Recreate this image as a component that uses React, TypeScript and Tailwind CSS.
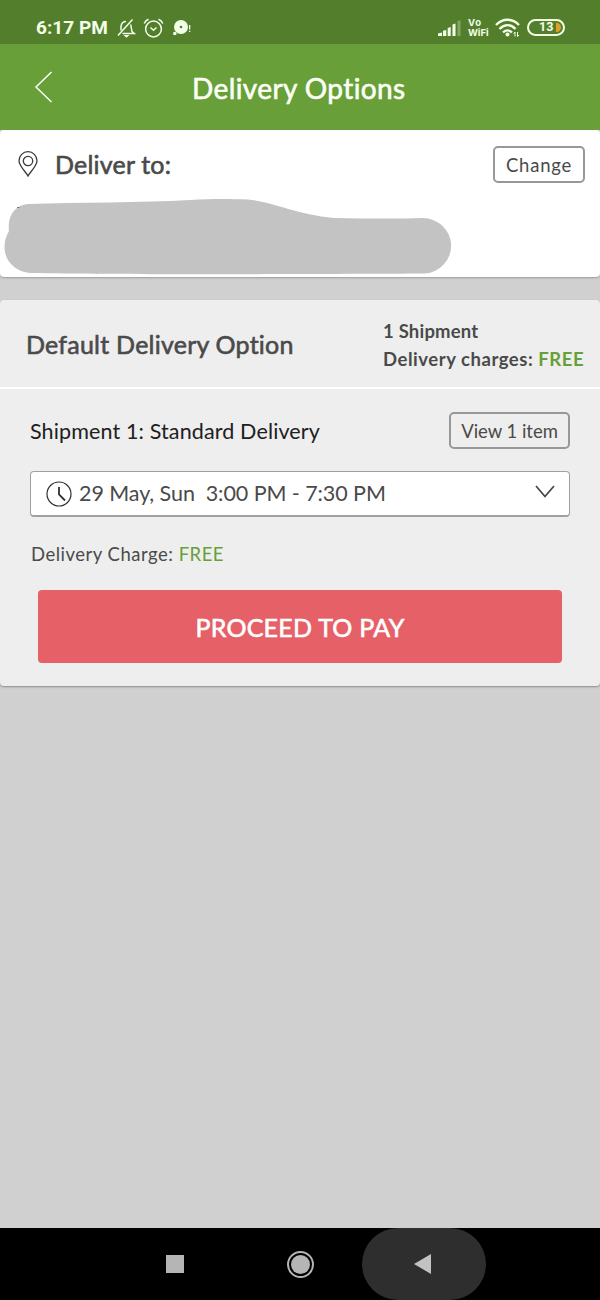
import React from 'react';

const StatusBar: React.FC = () => (
  <div className="flex h-11 items-center bg-[#537f2d] pl-9 pr-[35px] pt-[11px] text-[#f4ffe8]">
    <span className="w-[80px] whitespace-nowrap font-['Roboto',sans-serif] text-[19px] font-bold leading-none tracking-[0.05px]">
      6:17 PM
    </span>
    <svg className="h-5 w-5" viewBox="0 0 20 20" fill="none" stroke="currentColor" strokeWidth="1.5">
      <path d="M5 12.5V8.5C5.3 5.5 7 3.5 10 3.5M14.5 6.5C15.5 8.5 15.2 11.500 16 13.500L18.300 15.500H6.500" />
      <path d="M2 17.500L16.500 1.500" />
      <path d="M7.500 17H13.500L10.500 19.700Z" fill="currentColor" stroke="none" />
    </svg>
    <svg className="ml-[7px] h-5 w-5 overflow-visible" viewBox="0 0 20 20" fill="none" stroke="currentColor" strokeWidth="1.5">
      <circle cx="10.500" cy="11" r="7.900" />
      <path d="M7.500 9.500L10.500 12.200L13.500 9.500M1.200 5.500C2 3.500 3.500 2 5.500 1.300M15.500 1.300C17.500 2 19 3.500 19.800 5.500" />
    </svg>
    <svg className="ml-[10px] h-5 w-5" viewBox="0 0 20 20" fill="currentColor">
      <circle cx="8" cy="9" r="7" />
      <circle cx="1.800" cy="15.500" r="1.800" />
      <circle cx="8" cy="9" r="1.300" fill="#537f2d" />
      <path d="M16 7H17.300V11.500H16ZM16 12.800H17.300V14H16Z" />
    </svg>

    <svg className="ml-auto h-[18px] w-6" viewBox="0 0 24 18" fill="currentColor">
      <path d="M0 14.500L4 13.500V17H0ZM5 11.800L8.300 11V17H5ZM9.700 9L12.700 8V17H9.700ZM14.500 5.500L17.500 4.500V17H14.500Z" />
      <path d="M19.500 2L22.500 1V17H19.500Z" opacity="0.3" />
    </svg>
    <div className="ml-[6px] w-[22px] whitespace-nowrap font-['Inter',sans-serif] text-[9.5px] font-bold leading-[9.5px]">
      <div className="tracking-[0.8px]">Vo</div>
      <div>WiFi</div>
    </div>
    <svg className="ml-[5px] h-5 w-[25px]" viewBox="0 0 25 20" fill="none" stroke="currentColor" strokeWidth="2.300">
      <path d="M1 7C7.500 0 17.500 0 24 7M4.500 11C9.500 6 15.500 6 20.500 11M8 14.300C11 11.800 14 11.800 17 14.300" />
      <circle cx="12.500" cy="16.500" r="2" fill="currentColor" stroke="none" />
      <path d="M20 18.500V14L18.500 15.500M22.500 14V18.500L24 17" strokeWidth="1" />
    </svg>
    <div className="ml-[7px] flex h-[17px] w-[38px] items-center rounded-full border-2 border-current pl-[10px]">
      <span className="w-[17px] font-['Roboto',sans-serif] text-[12.5px] font-bold leading-none">13</span>
      <span className="h-[9px] w-[5px] rounded-r-full bg-[#dfa02b]" />
    </div>
  </div>
);

const Header: React.FC = () => (
  <header className="flex h-[86px] items-center bg-[#689f38] pl-[34px] text-[#fbfff5]">
    <svg className="h-8 w-[18px]" viewBox="0 0 18 32" fill="none" stroke="currentColor" strokeWidth="1.500">
      <path d="M17.500 1L2 16L17.500 31" />
    </svg>
    <h1 className="ml-[140px] mt-[2px] whitespace-nowrap text-[28px] leading-none tracking-[0.4px] [-webkit-text-stroke:0.6px]">
      Delivery Options
    </h1>
  </header>
);

const Address: React.FC = () => (
  <section className="h-[147px] rounded-[4px] bg-white shadow-[0_1px_2px_#9b9b9b]">
    <div className="flex h-[68px] items-center pl-[18px] pr-[15px]">
      <svg className="-mt-px h-[26px] w-5" viewBox="0 0 20 26" fill="none" stroke="#3c3c3c" strokeWidth="1.300">
        <path d="M10 25C8 21 1 15 1 9.700A9 9 0 0 1 19 9.700C19 15 12 21 10 25Z" />
        <circle cx="10" cy="10" r="4.700" />
      </svg>
      <h2 className="ml-[17px] whitespace-nowrap text-[25px] leading-none tracking-[0.2px] text-[#4a4a4a] [-webkit-text-stroke:0.6px]">
        Deliver to:
      </h2>
      <button className="ml-auto h-[37px] w-[92px] whitespace-nowrap rounded-[5px] border-2 border-[#989898] pt-[2px] text-[18.5px] leading-none tracking-[0.8px] text-[#4a4a4a]">
        Change
      </button>
    </div>
    {/* blanked out address */}
    <svg className="h-[79px] w-[460px]" viewBox="0 198 460 79">
      <path
        d="M28 204C80 202 140 203 190 200C215 198.500 230 199 248 199.500C270 201 295 214 334 218C365 218.500 395 219 423 218A28.500 27.800 0 0 1 425 273.500C330 274 120 275 30 273C8 271 -2 250 9 231C7 216 15 205 28 204Z"
        fill="#c3c3c3"
      />
      <path d="M17 207.500H19.500" stroke="#777" />
    </svg>
  </section>
);

const DeliveryOption: React.FC = () => (
  <section className="mt-[23px] h-[386px] rounded-[4px] bg-[#eeeeee] shadow-[0_1px_2px_#8c8c8c]">
    <div className="flex h-[89px] items-center justify-between border-b-2 border-white pl-[26px]">
      <h2 className="mt-[2px] whitespace-nowrap text-[25px] leading-none tracking-[0.23px] text-[#4a4a4a] [-webkit-text-stroke:0.6px]">
        Default Delivery Option
      </h2>
      <div className="mt-[2px] w-[217px] whitespace-nowrap text-[18.5px] font-bold leading-7 text-[#4a4a4a]">
        <div className="tracking-[0.2px]">1 Shipment</div>
        <div className="tracking-[0.54px]">
          Delivery charges: <span className="text-[#689f38]">FREE</span>
        </div>
      </div>
    </div>

    <div className="px-[30px] pt-[23px]">
      <div className="flex h-[37px] items-center justify-between">
        <h3 className="mt-[3px] whitespace-nowrap text-[21.5px] leading-none tracking-[0.13px] text-[#202020]">Shipment 1: Standard Delivery</h3>
        <button className="h-[37px] w-[121px] whitespace-nowrap rounded-[5px] border-2 border-[#989898] pt-[2px] text-[18.5px] leading-none tracking-[-0.03px] text-[#4a4a4a]">
          View 1 item
        </button>
      </div>

      <div className="mt-[22px] flex h-[46px] items-center rounded-[4px] border border-b-2 border-[#a0a0a0] bg-white pl-[15px] pr-[14px]">
        <svg className="h-[26px] w-[26px] shrink-0" viewBox="0 0 26 26" fill="none" stroke="#303030">
          <circle cx="13" cy="13" r="12" strokeWidth="1.200" />
          <path d="M13 6V13.500L19 19.500" strokeWidth="1.800" />
        </svg>
        <span className="ml-[7px] whitespace-pre text-[21.5px] leading-none tracking-[-0.07px] text-[#4a4a4a]">29 May, Sun  3:00 PM - 7:30 PM</span>
        <svg className="-mt-[4px] ml-auto h-[13px] w-5" viewBox="0 0 20 13" fill="none" stroke="#444" strokeWidth="1.700">
          <path d="M1 1L10 11.500L19 1" />
        </svg>
      </div>

      <p className="mt-[23px] whitespace-nowrap pl-px text-[18.5px] leading-7 tracking-[0.5px] text-[#4a4a4a]">
        Delivery Charge: <span className="text-[#689f38]">FREE</span>
      </p>

      <button className="mx-2 mt-[22px] block h-[73px] w-[524px] whitespace-nowrap rounded-[4px] bg-[#e66067] pt-[2px] text-[25px] leading-none tracking-[0.25px] text-white [-webkit-text-stroke:0.6px]">
        PROCEED TO PAY
      </button>
    </div>
  </section>
);

const NavBar: React.FC = () => (
  <nav className="mt-auto flex h-[72px] items-center bg-black">
    <span className="ml-[166px] h-[18px] w-[18px] bg-[#b5b5b5]" />
    <span className="ml-[103px] flex h-[27px] w-[27px] items-center justify-center rounded-full border-2 border-[#b5b5b5]">
      <span className="h-[19px] w-[19px] rounded-full bg-[#b5b5b5]" />
    </span>
    <span className="ml-[48px] flex h-[72px] w-[124px] items-center justify-center rounded-full bg-[#2e2e2e]">
      <svg className="mr-[3px] h-5 w-[17px]" viewBox="0 0 17 20" fill="#c2c2c2">
        <path d="M0 10L17 0V20Z" />
      </svg>
    </span>
  </nav>
);

export default function App() {
  return (
    <div className="flex h-[1300px] w-[600px] flex-col overflow-hidden bg-[#d0d0d0] font-['Lato',sans-serif]">
      <StatusBar />
      <Header />
      <Address />
      <DeliveryOption />
      <NavBar />
    </div>
  );
}
